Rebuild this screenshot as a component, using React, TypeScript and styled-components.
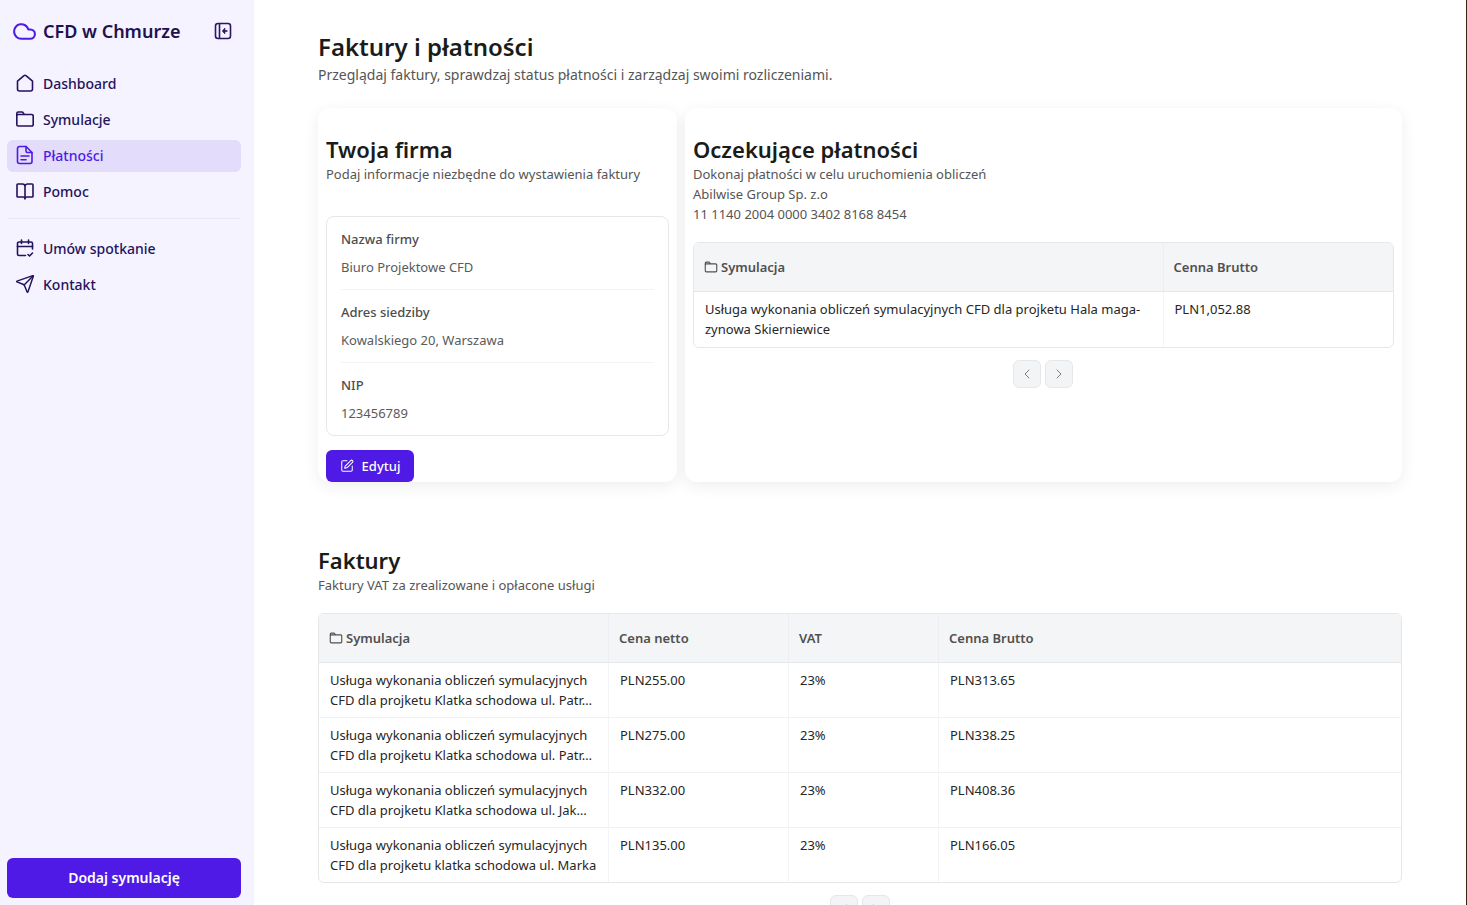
import React from 'react';
import styled, { createGlobalStyle } from 'styled-components';
import { ChevronLeft, ChevronRight, Cloud, SquarePen, Send } from 'lucide-react';

const GlobalStyle = createGlobalStyle`
  html, body {
    margin: 0;
    height: 100%;
    overflow: hidden;
    background: #ffffff;
    font-family: "Noto Sans", "Open Sans", sans-serif;
  }
  * {
    box-sizing: border-box;
  }
`;

const Layout = styled.div`
  display: flex;
  height: 905px;
  overflow: hidden;
  border-right: 1px solid #3a2210;
`;

const Sidebar = styled.aside`
  flex: 0 0 254px;
  display: flex;
  flex-direction: column;
  padding: 0 13px 7px 7px;
  background: #f5f3ff;
`;

const Brand = styled.div`
  display: flex;
  align-items: center;
  height: 62px;
  padding: 0 0 0 5px;
  color: #21104f;
`;

const BrandName = styled.span`
  margin-left: 6px;
  font-size: 18px;
  font-weight: 600;
  white-space: nowrap;
`;

const CollapseButton = styled.button`
  display: flex;
  margin-left: auto;
  margin-right: 9px;
  padding: 0;
  border: 0;
  background: none;
  color: #2b1763;
`;

const Nav = styled.nav`
  display: flex;
  flex-direction: column;
  gap: 4px;
  margin-top: 6px;
`;

const SecondaryNav = styled(Nav)`
  margin-top: 0;
`;

const NavItem = styled.a<{ $active?: boolean }>`
  display: flex;
  align-items: center;
  gap: 8px;
  height: 32px;
  padding: 0 8px 2px;
  border-radius: 6px;
  font-size: 14px;
  font-weight: 500;
  color: ${p => (p.$active ? '#4f1ae6' : '#24125c')};
  background: ${p => (p.$active ? '#e3dcfa' : 'transparent')};
`;

const NavDivider = styled.hr`
  width: 100%;
  margin: 10px 0 14px;
  border: 0;
  border-top: 1px solid #ebe7f7;
`;

const AddButton = styled.button`
  margin-top: auto;
  height: 40px;
  padding: 0 0 2px;
  border: 0;
  border-radius: 6px;
  background: #4f1ae6;
  color: #ffffff;
  font-family: inherit;
  font-size: 14px;
  font-weight: 600;
`;

const Main = styled.main`
  flex: 1;
  min-width: 0;
  padding: 31px 64px 0;
  color: #1a1c1a;
`;

const PageTitle = styled.h1`
  margin: 0;
  font-size: 24px;
  line-height: 32px;
  font-weight: 600;
`;

const PageSubtitle = styled.p`
  margin: 0;
  font-size: 14px;
  line-height: 24px;
  color: #555555;
`;

const Cards = styled.div`
  display: grid;
  grid-template-columns: 359px 717px;
  gap: 8px;
  height: 374px;
  margin-top: 21px;
`;

const Card = styled.section`
  display: flex;
  flex-direction: column;
  padding: 27px 8px 0;
  border-radius: 12px;
  background: #ffffff;
  box-shadow: 0 4px 16px rgba(0, 0, 0, 0.07);
`;

const CardTitle = styled.h2`
  margin: 0;
  font-size: 22px;
  line-height: 29px;
  font-weight: 600;
`;

const CardText = styled.p`
  margin: 0;
  font-size: 13px;
  line-height: 20px;
  color: #555555;
`;

const InfoBox = styled.dl`
  margin: 32px 0 14px;
  padding: 0 14px;
  border: 1px solid #e5e7eb;
  border-radius: 8px;
`;

const InfoRow = styled.div`
  height: 73px;
  padding-top: 12px;
  border-bottom: 1px solid #f3f4f6;
  &:last-child {
    height: 72px;
    border-bottom: 0;
  }
`;

const InfoLabel = styled.dt`
  font-size: 13px;
  line-height: 20px;
  font-weight: 500;
  color: #4d4d4d;
`;

const InfoValue = styled.dd`
  margin: 8px 0 0;
  font-size: 13px;
  line-height: 20px;
  color: #5a5a5a;
`;

const EditButton = styled.button`
  display: flex;
  align-items: center;
  justify-content: center;
  gap: 8px;
  width: 88px;
  height: 32px;
  padding: 0;
  border: 0;
  border-radius: 6px;
  background: #4f1ae6;
  color: #ffffff;
  font-family: inherit;
  font-size: 13px;
  font-weight: 500;
`;

const TableWrap = styled.div`
  margin-top: 18px;
  border: 1px solid #e5e7eb;
  border-radius: 6px;
  overflow: hidden;
`;

const Table = styled.table`
  width: 100%;
  border-collapse: collapse;
  table-layout: fixed;
`;

const HeadCell = styled.th`
  height: 48px;
  padding: 0 10px;
  border-right: 1px solid #eceef1;
  border-bottom: 1px solid #e5e7eb;
  background: #f4f5f7;
  text-align: left;
  font-size: 13px;
  font-weight: 600;
  color: #505050;
  &:last-child {
    border-right: 0;
  }
`;

const HeadLabel = styled.span`
  display: flex;
  align-items: center;
  gap: 3px;
`;

const Row = styled.tr`
  border-bottom: 1px solid #f0f1f3;
  &:last-child {
    border-bottom: 0;
  }
`;

const BodyCell = styled.td`
  height: 55px;
  padding: 7px 11px 7px;
  border-right: 1px solid #f3f4f6;
  vertical-align: top;
  font-size: 13px;
  line-height: 20px;
  color: #262626;
  &:last-child {
    border-right: 0;
  }
`;

const PendingCell = styled(BodyCell)`
  height: 56px;
`;

const Pager = styled.div`
  display: flex;
  justify-content: center;
  gap: 4px;
  margin-top: 12px;
  padding-right: 1px;
`;

const PageButton = styled.button`
  display: flex;
  align-items: center;
  justify-content: center;
  width: 28px;
  height: 28px;
  padding: 0;
  border: 1px solid #e5e7eb;
  border-radius: 6px;
  background: #f3f4f6;
  color: #7d7d7d;
`;

const Section = styled.section`
  margin-top: 63px;
`;

const SectionTitle = styled.h2`
  margin: 0;
  font-size: 22px;
  line-height: 30px;
  font-weight: 600;
`;

type IconProps = { size?: number };

const HomeIcon = ({ size = 20 }: IconProps) => (
  <svg width={size} height={size} viewBox="0 0 20 20" fill="none" stroke="currentColor" strokeWidth="1.6" strokeLinejoin="round">
    <path d="M2.500 8.200 9 2.700a1.500 1.500 0 0 1 2 0l6.500 5.500V16a2 2 0 0 1-2 2h-11a2 2 0 0 1-2-2V8.200Z" />
  </svg>
);

const FolderIcon = ({ size = 20 }: IconProps) => (
  <svg width={size} height={size} viewBox="0 0 20 20" fill="none" stroke="currentColor" strokeWidth="1.6" strokeLinejoin="round" strokeLinecap="round">
    <path d="M1.800 7V4.500A1.500 1.500 0 0 1 3.300 3h3.600c.5 0 1 .3 1.200.7l1.100 1.800H3.300A1.500 1.500 0 0 0 1.800 7v8.500A1.500 1.500 0 0 0 3.300 17h13.400a1.500 1.500 0 0 0 1.500-1.500V7a1.500 1.500 0 0 0-1.500-1.500H9.200" />
  </svg>
);

const PaymentIcon = ({ size = 20 }: IconProps) => (
  <svg width={size} height={size} viewBox="0 0 20 20" fill="none" stroke="currentColor" strokeWidth="1.6" strokeLinecap="round" strokeLinejoin="round">
    <path d="M4.500 1.500H11l6 6v9a2 2 0 0 1-2 2H4.500a2 2 0 0 1-2-2v-13a2 2 0 0 1 2-2Z" />
    <path d="M11 1.500V6a1.500 1.500 0 0 0 1.500 1.500H17" />
    <path d="M6 11h8M6 14.700h5" />
  </svg>
);

const BookIcon = ({ size = 20 }: IconProps) => (
  <svg width={size} height={size} viewBox="0 0 20 20" fill="none" stroke="currentColor" strokeWidth="1.6" strokeLinejoin="round" strokeLinecap="round">
    <path d="M10 5.500A2.500 2.500 0 0 0 7.500 3H2.800a.8.8 0 0 0-.8.8v11.400c0 .4.400.8.800.8H8c1 0 2 .8 2 2 0-1.200 1-2 2-2h5.200c.400 0 .8-.4.8-.8V3.800a.8.8 0 0 0-.8-.8h-4.700A2.500 2.500 0 0 0 10 5.500v12.500" />
  </svg>
);

const CollapseIcon = () => (
  <svg width="18" height="18" viewBox="0 0 18 18" fill="none" stroke="currentColor" strokeWidth="1.6" strokeLinejoin="round">
    <rect x="1.500" y="1.500" width="15" height="15" rx="2.500" />
    <path d="M5.500 1.500v15" />
    <path d="M13.500 9H9.500" />
    <path d="M10.800 6.300 8.500 9l2.300 2.700Z" fill="currentColor" strokeWidth="1" />
  </svg>
);

const CalendarCheckIcon = () => (
  <svg width="20" height="20" viewBox="0 0 20 20" fill="none" stroke="currentColor" strokeWidth="1.6" strokeLinecap="round" strokeLinejoin="round">
    <path d="M17.500 11V5.500a1.500 1.500 0 0 0-1.500-1.500H4a1.500 1.500 0 0 0-1.500 1.500V16A1.500 1.500 0 0 0 4 17.500h6.500" />
    <path d="M6.500 2v3.500M13.500 2v3.500M2.500 8.500h15M13 16.500l1.500 1.500 3-3" />
  </svg>
);

const invoices = [
  { name: 'Usługa wykonania obliczeń symulacyjnych CFD dla projketu Klatka schodowa ul. Patr…', net: 'PLN255.00', gross: 'PLN313.65' },
  { name: 'Usługa wykonania obliczeń symulacyjnych CFD dla projketu Klatka schodowa ul. Patr…', net: 'PLN275.00', gross: 'PLN338.25' },
  { name: 'Usługa wykonania obliczeń symulacyjnych CFD dla projketu Klatka schodowa ul. Jak…', net: 'PLN332.00', gross: 'PLN408.36' },
  { name: 'Usługa wykonania obliczeń symulacyjnych CFD dla projketu klatka schodowa ul. Marka', net: 'PLN135.00', gross: 'PLN166.05' },
];

const companyInfo = [
  { label: 'Nazwa firmy', value: 'Biuro Projektowe CFD' },
  { label: 'Adres siedziby', value: 'Kowalskiego 20, Warszawa' },
  { label: 'NIP', value: '123456789' },
];

const Pagination: React.FC = () => (
  <Pager>
    <PageButton><ChevronLeft size={16} strokeWidth={1.5} /></PageButton>
    <PageButton><ChevronRight size={16} strokeWidth={1.5} /></PageButton>
  </Pager>
);

const App: React.FC = () => (
  <Layout>
    <GlobalStyle />
    <Sidebar>
      <Brand>
        <Cloud size={25} color="#4f1ae6" strokeWidth={2} />
        <BrandName>CFD w Chmurze</BrandName>
        <CollapseButton><CollapseIcon /></CollapseButton>
      </Brand>
      <Nav>
        <NavItem><HomeIcon />Dashboard</NavItem>
        <NavItem><FolderIcon />Symulacje</NavItem>
        <NavItem $active><PaymentIcon />Płatności</NavItem>
        <NavItem><BookIcon />Pomoc</NavItem>
      </Nav>
      <NavDivider />
      <SecondaryNav as="div">
        <NavItem><CalendarCheckIcon />Umów spotkanie</NavItem>
        <NavItem><Send size={20} strokeWidth={1.75} />Kontakt</NavItem>
      </SecondaryNav>
      <AddButton>Dodaj symulację</AddButton>
    </Sidebar>
    <Main>
      <PageTitle>Faktury i płatności</PageTitle>
      <PageSubtitle>Przeglądaj faktury, sprawdzaj status płatności i zarządzaj swoimi rozliczeniami.</PageSubtitle>
      <Cards>
        <Card>
          <CardTitle>Twoja firma</CardTitle>
          <CardText>Podaj informacje niezbędne do wystawienia faktury</CardText>
          <InfoBox>
            {companyInfo.map(info => (
              <InfoRow key={info.label}>
                <InfoLabel>{info.label}</InfoLabel>
                <InfoValue>{info.value}</InfoValue>
              </InfoRow>
            ))}
          </InfoBox>
          <EditButton><SquarePen size={14} strokeWidth={1.75} />Edytuj</EditButton>
        </Card>
        <Card>
          <CardTitle>Oczekujące płatności</CardTitle>
          <CardText>
            Dokonaj płatności w celu uruchomienia obliczeń
            <br />
            Abilwise Group Sp. z.o
            <br />
            11 1140 2004 0000 3402 8168 8454
          </CardText>
          <TableWrap>
            <Table>
              <colgroup>
                <col width="469" />
                <col />
              </colgroup>
              <thead>
                <tr>
                  <HeadCell><HeadLabel><FolderIcon size={14} />Symulacja</HeadLabel></HeadCell>
                  <HeadCell>Cenna Brutto</HeadCell>
                </tr>
              </thead>
              <tbody>
                <Row>
                  <PendingCell>Usługa wykonania obliczeń symulacyjnych CFD dla projketu Hala maga-zynowa Skierniewice</PendingCell>
                  <PendingCell>PLN1,052.88</PendingCell>
                </Row>
              </tbody>
            </Table>
          </TableWrap>
          <Pagination />
        </Card>
      </Cards>
      <Section>
        <SectionTitle>Faktury</SectionTitle>
        <CardText>Faktury VAT za zrealizowane i opłacone usługi</CardText>
        <TableWrap>
          <Table>
            <colgroup>
              <col width="289.5" />
              <col width="180" />
              <col width="150" />
              <col />
            </colgroup>
            <thead>
              <tr>
                <HeadCell><HeadLabel><FolderIcon size={14} />Symulacja</HeadLabel></HeadCell>
                <HeadCell>Cena netto</HeadCell>
                <HeadCell>VAT</HeadCell>
                <HeadCell>Cenna Brutto</HeadCell>
              </tr>
            </thead>
            <tbody>
              {invoices.map(invoice => (
                <Row key={invoice.net}>
                  <BodyCell>{invoice.name}</BodyCell>
                  <BodyCell>{invoice.net}</BodyCell>
                  <BodyCell>23%</BodyCell>
                  <BodyCell>{invoice.gross}</BodyCell>
                </Row>
              ))}
            </tbody>
          </Table>
        </TableWrap>
        <Pagination />
      </Section>
    </Main>
  </Layout>
);

export default App;
